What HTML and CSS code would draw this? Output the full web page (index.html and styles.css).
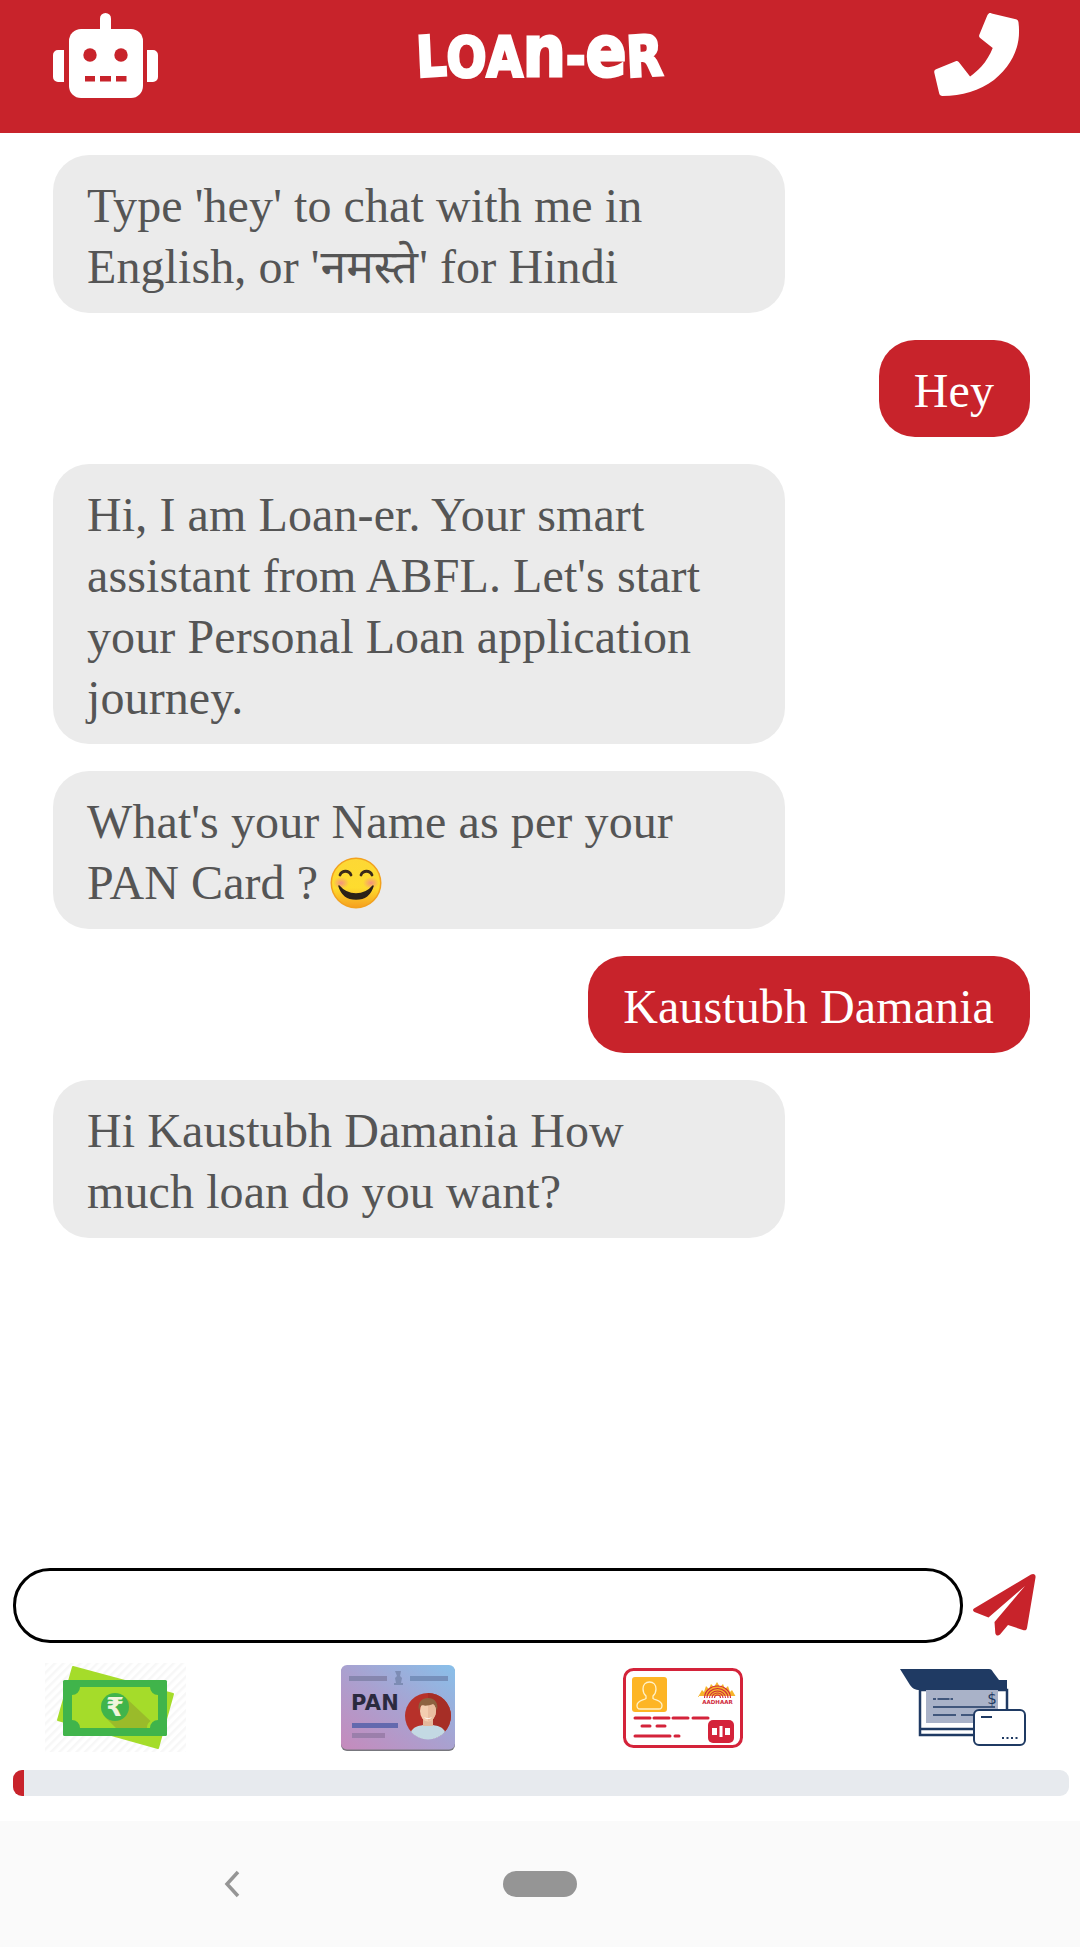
FILE: index.html
```html
<!DOCTYPE html>
<html lang="en">
<head>
<meta charset="utf-8">
<title>Loan-er</title>
<link rel="stylesheet" href="styles.css">
</head>
<body>
<header class="topbar">
  <svg class="robot" viewBox="0 0 105 85" aria-hidden="true">
    <rect x="47" y="0" width="11" height="24" rx="5.5" fill="#fff"/>
    <rect x="16" y="16" width="74" height="69" rx="12" fill="#fff"/>
    <path d="M11 37v32H5a5 5 0 0 1-5-5V42a5 5 0 0 1 5-5zM94 37h6a5 5 0 0 1 5 5v22a5 5 0 0 1-5 5h-6z" fill="#fff"/>
    <circle cx="37" cy="42" r="6.7" fill="#c8232b"/>
    <circle cx="68" cy="42" r="6.7" fill="#c8232b"/>
    <rect x="32" y="63" width="10" height="5.5" fill="#c8232b"/>
    <rect x="47" y="63" width="11" height="5.5" fill="#c8232b"/>
    <rect x="63" y="63" width="10.500" height="5.5" fill="#c8232b"/>
  </svg>
  <h1 class="brand"><span class="l1">L</span><span class="l2">O</span><span class="l3">A</span><span class="l4">n</span><span class="l5">-</span><span class="l6">e</span><span class="l7">R</span></h1>
  <svg class="phone" viewBox="0 0 86 86" aria-hidden="true">
    <path d="M23 1.500c-1-.6-2-.6-2.800 0-.8.5-1.200 1.200-1.500 2L11 22c-.5 1.300-.3 2.400.8 3.300L24 35c-2.500 6.500-6.500 13-11 18-3.500 3.800-7 6.800-11 9.500L-9 48.500c-.8-1-1.800-1.300-3-.8l-19 8c-1.500.6-2 1.700-1.700 3.200L-28 79c.4 1.700 1.500 2.500 3.200 2.500 19 0 36-5 50-15.500C39 55 47 41 49 27c.7-5 .8-11 0-17-.2-1.500-1-2.500-2.500-2.900z" transform="translate(34 -1) scale(1.030)" fill="#fff"/>
  </svg>
</header>

<main class="chat">
  <p class="msg bot">Type 'hey' to chat with me in English, or '<span class="hi" lang="hi">नमस्ते</span>' for Hindi</p>
  <p class="msg user">Hey</p>
  <p class="msg bot">Hi, I am Loan-er. Your smart assistant from ABFL. Let's start your Personal Loan application journey.</p>
  <p class="msg bot">What's your Name as per your PAN Card ? <svg class="emoji" viewBox="0 0 52 52" aria-hidden="true">
      <defs>
        <linearGradient id="face" x1="0" y1="0" x2="0" y2="1">
          <stop offset="0" stop-color="#fdd835"/><stop offset=".6" stop-color="#fedc2e"/><stop offset="1" stop-color="#f6a11f"/>
        </linearGradient>
        <radialGradient id="blush"><stop offset="0" stop-color="#f4937c"/><stop offset="1" stop-color="#f4937c" stop-opacity="0"/></radialGradient>
      </defs>
      <circle cx="26" cy="26" r="25.500" fill="#f2a11e"/>
      <circle cx="26" cy="26" r="24" fill="url(#face)"/>
      <ellipse cx="11" cy="26" rx="8" ry="6" fill="url(#blush)"/>
      <ellipse cx="41" cy="26" rx="8" ry="6" fill="url(#blush)"/>
      <path d="M10 18c2-5 9-5 11 0M31 18c2-5 9-5 11 0" fill="none" stroke="#3a2a1a" stroke-width="2.800" stroke-linecap="round"/>
      <path d="M9 29c5 6 10 8 17 8s12-2 17-8c-3 10-9 13-17 13S12 39 9 29z" fill="#2b2118" stroke="#2b2118" stroke-width="1.500" stroke-linejoin="round"/>
    </svg></p>
  <p class="msg user">Kaustubh Damania</p>
  <p class="msg bot">Hi Kaustubh Damania How much loan do you want?</p>
</main>

<form class="composer">
  <input class="field" type="text" aria-label="Message">
  <svg class="send" viewBox="0 0 64 63" aria-hidden="true">
    <path d="M1 35.500 58 1.500c2.500-1.500 5-.2 4.500 3L54 55c-.4 2-1.500 2.700-3.300 2.200L35 52l-8 9.500c-2 2-4.500 1-4.700-1.500L21.500 49 52 13 15.500 44.500 1.500 39c-1.700-.7-2-2.500-.5-3.500z" fill="#c8232b"/>
  </svg>
</form>

<section class="docs">
  <svg class="doc money" viewBox="0 0 141 89" aria-hidden="true">
    <defs>
      <pattern id="hatch" width="6" height="6" patternUnits="userSpaceOnUse" patternTransform="rotate(45)">
        <rect width="6" height="6" fill="#fff"/><rect width="2.500" height="6" fill="#f7f7f7"/>
      </pattern>
    </defs>
    <rect width="141" height="89" fill="url(#hatch)"/>
    <path d="M28 4l100 27-15 54L13 57z" fill="#a5dc2a" stroke="#a5dc2a" stroke-width="2" stroke-linejoin="round"/>
    <rect x="18" y="17" width="104" height="56" rx="1.500" fill="#40b44b"/>
    <path d="M27 32a8 8 0 0 0 8-8h70a8 8 0 0 0 8 8v25a8 8 0 0 0-8 8H35a8 8 0 0 0-8-8z" fill="#a5dc2a"/>
    <path d="M60 54l11 11h31a8 8 0 0 1 3.500-7L80 34z" fill="#9abb2a"/>
    <circle cx="70" cy="44" r="14" fill="#40b44b"/>
    <text class="rupee" x="70" y="53" text-anchor="middle">₹</text>
  </svg>

  <svg class="doc pan" viewBox="0 0 114 86" aria-hidden="true">
    <defs>
      <linearGradient id="pancard" x1="0" y1="1" x2="1" y2="0">
        <stop offset="0" stop-color="#c68abc"/><stop offset=".5" stop-color="#a9a1d0"/><stop offset="1" stop-color="#88c0ea"/>
      </linearGradient>
    </defs>
    <rect x="0" y="1" width="114" height="85" rx="6" fill="#77777d"/>
    <rect x="0" y="0" width="114" height="84.500" rx="6" fill="url(#pancard)"/>
    <rect x="8" y="11" width="38" height="5" fill="#8686ae"/>
    <rect x="69" y="11" width="38" height="5" fill="#7690bb"/>
    <path d="M54 6h6l-1 5 2 2-1 5h2v2h-9v-2h2l-1-5 2-2z" fill="#7d8cb4"/>
    <text class="pantext" x="10" y="45">PAN</text>
    <rect x="11" y="58" width="46" height="5" fill="#6369ae"/>
    <rect x="11" y="68" width="33" height="5" fill="#9b7fab"/>
    <circle cx="87" cy="51" r="23" fill="#b7312a"/>
    <path d="M87 28a23 23 0 0 1 0 46z" fill="#a62e26"/>
    <path d="M70 67c2-5 7-6 12-7h10c5 1 10 2 12 7a23 23 0 0 1-34 0z" fill="#c3d9e3"/>
    <rect x="82" y="52" width="10" height="9" fill="#e3b89c"/>
    <ellipse cx="87" cy="46" rx="8" ry="10.500" fill="#f3cdb0"/>
    <path d="M87 36v20c4 0 8-5 8-10s-3-10-8-10z" fill="#e9bda0"/>
    <path d="M78 46c-2-9 3-13 9-13s11 4 9 13c-1-4-2-6-4-7-4 2-10 2-11 1-2 1-2 3-3 6z" fill="#8d6240"/>
    <path d="M83 52c2 1.500 6 1.500 8 0-1 2.500-7 2.500-8 0z" fill="#fff"/>
  </svg>

  <svg class="doc aadhaar" viewBox="0 0 120 80" aria-hidden="true">
    <rect x="1.500" y="1.500" width="117" height="77" rx="9" fill="#fff" stroke="#d4233a" stroke-width="3"/>
    <rect x="9" y="9" width="35" height="35" rx="3" fill="#fdb525"/>
    <path d="M26.500 14c-4 0-6.500 3-6.500 7 0 3 1.300 5.500 3 7v2.500c-3 2-9 2-9 7 0 2.500 1 3.500 3 3.500h19c2 0 3-1 3-3.500 0-5-6-5-9-7V28c1.700-1.500 3-4 3-7 0-4-2.500-7-6.500-7z" fill="none" stroke="#fff2c9" stroke-width="1.300"/>
    <path d="M75 29l4-7 2 2 2-6 3 3 2-5 3 3 3-5 3 5 3-3 2 5 3-3 2 6 2-2 4 7z" fill="#f6b42c"/>
    <rect x="76" y="28" width="38" height="3" fill="#fff"/>
    <g fill="none" stroke="#cf2a3c" stroke-width="1.100">
      <path d="M81.500 30a13 12 0 0 1 26 0"/>
      <path d="M84 30a10.500 9.500 0 0 1 21 0"/>
      <path d="M86.500 30a8 7 0 0 1 16 0"/>
      <path d="M89 30a5.500 5 0 0 1 11 0"/>
      <path d="M91.500 30a3 3 0 0 1 6 0"/>
    </g>
    <text class="uid" x="94.500" y="36" text-anchor="middle">AADHAAR</text>
    <g stroke="#d4233a" stroke-width="3" stroke-linecap="round">
      <path d="M12 50h15M31 50h15M50 50h15M70 50h15M19 58h8M34 58h8M12 68h35M52 68h4"/>
    </g>
    <rect x="85" y="52" width="26" height="23" rx="5" fill="#d4233a"/>
    <g fill="#fff">
      <rect x="89" y="60" width="5" height="7"/><rect x="96.500" y="58" width="3" height="11"/><rect x="102" y="60" width="5" height="7"/>
    </g>
  </svg>

  <svg class="doc cheque" viewBox="0 0 126 77" aria-hidden="true">
    <path d="M20 21h87v45H20z" fill="#fff" stroke="#1f3a63" stroke-width="2.500"/>
    <path d="M26 21h72v33H26z" fill="#a9b2c8"/>
    <path d="M20 60h87" stroke="#1f3a63" stroke-width="2.500"/>
    <path d="M0 0h89c2 0 3 1 4 3l6 8h8v10H20c-5 0-8-2-10-5z" fill="#1f3a63"/>
    <path d="M33 30h20" stroke="#1f3a63" stroke-width="1.500" stroke-dasharray="3 1.500 12 1"/>
    <path d="M33 38h62M33 46h23M61 46h16" stroke="#1f3a63" stroke-width="1.500"/>
    <text class="dollar" x="92" y="35" text-anchor="middle">$</text>
    <rect x="74" y="41" width="51" height="35" rx="5" fill="#fff" stroke="#1f3a63" stroke-width="2"/>
    <path d="M81 48h11" stroke="#1f3a63" stroke-width="2"/>
    <path d="M102 69h16" stroke="#1f3a63" stroke-width="2" stroke-dasharray="2 2.500"/>
  </svg>
</section>

<div class="progress"><div class="progress-fill"></div></div>

<nav class="sysnav">
  <svg class="back" viewBox="0 0 16 28" aria-hidden="true">
    <path d="M14 2 3 14l11 12" fill="none" stroke="#959595" stroke-width="3.500"/>
  </svg>
  <span class="pill"></span>
</nav>
</body>
</html>
```

FILE: styles.css
```css
* { box-sizing: border-box; }

html, body { margin: 0; padding: 0; }

body {
  width: 1080px;
  height: 1947px;
  display: flex;
  flex-direction: column;
  background: #fff;
  font-family: "Liberation Serif", "Noto Sans", serif;
  overflow: hidden;
}

.topbar {
  height: 133px;
  flex: none;
  background: #c8232b;
  display: flex;
  align-items: flex-start;
  justify-content: space-between;
  padding: 13px 60px 0 53px;
}

.robot { width: 105px; height: 85px; flex: none; }
.phone { width: 86px; height: 86px; flex: none; }

.brand {
  margin: 5px 12px 0 0;
  color: #fff;
  font-family: "DejaVu Sans", sans-serif;
  font-weight: 700;
  font-size: 56px;
  line-height: 66px;
  -webkit-text-stroke: 3px #fff;
  display: flex;
  align-items: baseline;
  transform: scaleX(.84);
  transform-origin: center;
}
.brand span { display: inline-block; }
.brand .l1 { transform: rotate(-3deg); }
.brand .l4, .brand .l6 { font-size: 72px; }
.brand .l7 { transform: rotate(-3deg); }

.chat {
  flex: 1;
  min-height: 0;
  display: flex;
  flex-direction: column;
  align-items: flex-start;
  gap: 27px;
  padding: 22px 50px 0 53px;
}

.msg {
  margin: 0;
  padding: 20px 36px 16px 35px;
  font-size: 48px;
  letter-spacing: .1px;
  line-height: 61px;
  border-radius: 36px;
}

.bot {
  width: 732px;
  padding-left: 34px;
  padding-right: 50px;
  background: #ebebeb;
  color: #555;
}

.user {
  align-self: flex-end;
  background: #c8232b;
  color: #fff;
}

.hi {
  font-family: "Noto Sans", "Liberation Serif", sans-serif;
  font-size: 46px;
  line-height: 40px;
  margin: 0 1px;
}

.emoji { width: 52px; height: 52px; vertical-align: -10px; }

.composer {
  flex: none;
  display: flex;
  align-items: center;
  height: 75px;
  padding-left: 13px;
}

.field {
  width: 950px;
  height: 75px;
  border: 3px solid #000;
  border-radius: 37px;
  background: #fff;
  outline: none;
}

.send { width: 64px; height: 63px; margin: -2px 0 0 10px; }

.docs {
  flex: none;
  height: 89px;
  margin-top: 20px;
  padding-left: 45px;
  display: flex;
  align-items: center;
}

.doc { flex: none; display: block; }
.money { width: 141px; height: 89px; }
.pan { width: 114px; height: 86px; margin-left: 155px; }
.aadhaar { width: 120px; height: 80px; margin-left: 168px; }
.cheque { width: 126px; height: 77px; margin-left: 157px; }

.rupee { font: 700 26px "DejaVu Sans", sans-serif; fill: #f1f5dc; }
.pantext { font: 900 21px "DejaVu Sans", sans-serif; fill: #2b2a3f; letter-spacing: .3px; }
.uid { font: 700 5.500px "DejaVu Sans", sans-serif; fill: #cf2a3c; }
.dollar { font: 400 15px "DejaVu Sans", sans-serif; fill: #1f3a63; }

.progress {
  flex: none;
  width: 1056px;
  height: 26px;
  margin: 18px 0 25px 13px;
  border-radius: 9px;
  background: #e7eaee;
  overflow: hidden;
}

.progress-fill { width: 11px; height: 100%; background: #c8232b; }

.sysnav {
  flex: none;
  height: 126px;
  background: #fafafa;
  display: flex;
  align-items: flex-start;
  padding: 50px 0 0 224px;
}

.back { width: 16px; height: 28px; margin-top: -1px; }

.pill {
  width: 74px;
  height: 26px;
  margin-left: 263px;
  border-radius: 13px;
  background: #959595;
}
```
